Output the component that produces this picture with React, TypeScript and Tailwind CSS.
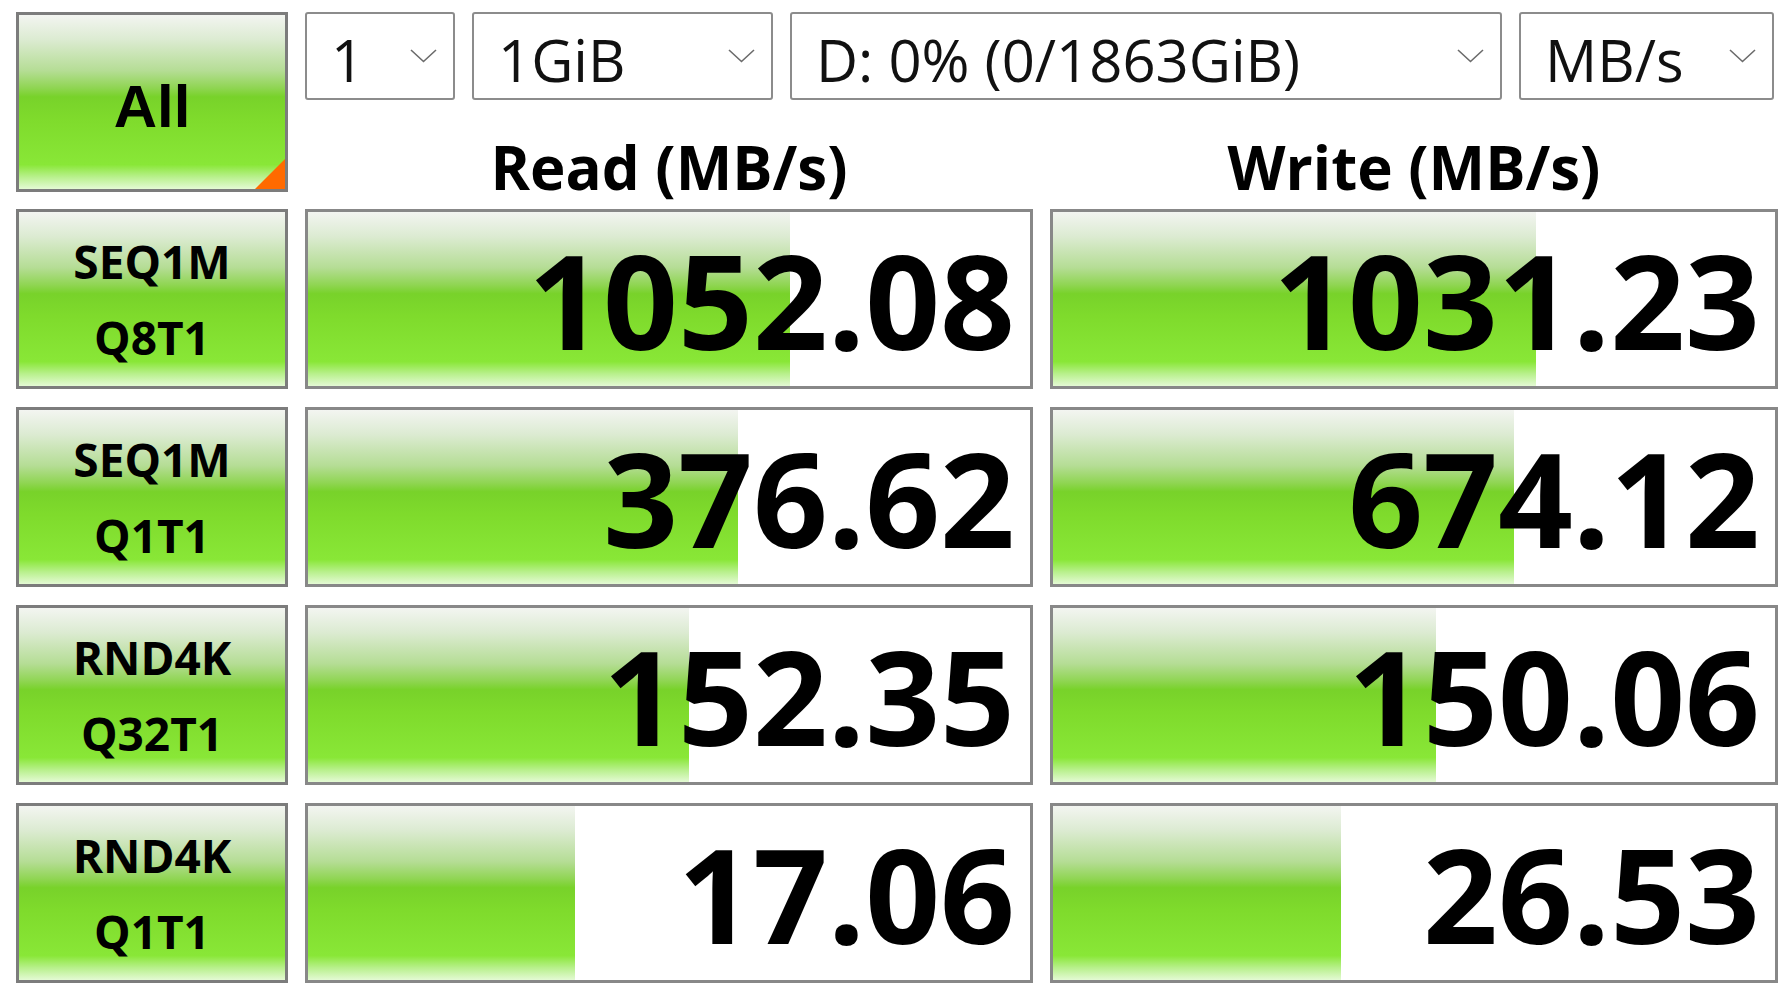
import React from 'react'

type Row = {
  label: [string, string]
  read: string
  write: string
  readFill: number
  writeFill: number
}

const ROWS: Row[] = [
  { label: ['SEQ1M', 'Q8T1'], read: '1052.08', write: '1031.23', readFill: 0.668, writeFill: 0.669 },
  { label: ['SEQ1M', 'Q1T1'], read: '376.62', write: '674.12', readFill: 0.596, writeFill: 0.639 },
  { label: ['RND4K', 'Q32T1'], read: '152.35', write: '150.06', readFill: 0.528, writeFill: 0.53 },
  { label: ['RND4K', 'Q1T1'], read: '17.06', write: '26.53', readFill: 0.37, writeFill: 0.399 },
]

const SELECTS: Array<{ value: string; width: string }> = [
  { value: '1', width: 'w-[150px]' },
  { value: '1GiB', width: 'w-[301px]' },
  { value: 'D: 0% (0/1863GiB)', width: 'w-[712px]' },
  { value: 'MB/s', width: 'w-[255px]' },
]

const GREEN =
  'bg-[linear-gradient(to_bottom,#f3f5f1_0%,#dcebd2_14%,#b5dd95_32%,#8fd552_42%,#78d22a_47%,#7fdb2c_60%,#89e737_86%,#b8f08c_93%,#e4fad4_100%)]'

function Chevron() {
  return (
    <svg width="27" height="14" viewBox="0 0 27 14" fill="none">
      <polyline points="1,1 13.5,12.5 26,1" stroke="#6b6b6b" strokeWidth="1.6" />
    </svg>
  )
}

function Select({ value, width }: { value: string; width: string }) {
  return (
    <div
      className={`${width} flex h-full items-center justify-between rounded-[3px] border-2 border-[#8c8c8c] bg-white pl-[24px] pr-[16px]`}
    >
      <span className="pt-[8px] text-[58px] leading-none text-[#111]">{value}</span>
      <Chevron />
    </div>
  )
}

function Meter({ value, fill }: { value: string; fill: number }) {
  return (
    <div className="relative flex h-full items-center justify-end overflow-hidden border-[3px] border-[#888] bg-white pr-[15px]">
      <div className={`absolute inset-y-0 left-0 ${GREEN}`} style={{ width: `${fill * 100}%` }} />
      <span className="relative text-[131px] font-bold leading-none text-black">{value}</span>
    </div>
  )
}

export default function App() {
  return (
    <div
      className="h-[1006px] w-[1787px] overflow-hidden bg-white pl-[16px] pt-[12px]"
      style={{ fontFamily: '"Open Sans", "Noto Sans", sans-serif' }}
    >
      <div className="flex gap-[17px]">
        <button
          className={`relative flex h-[180px] w-[272px] items-center justify-center border-[3px] border-[#7c7c7c] pt-[9px] ${GREEN}`}
        >
          <span
            className="text-[60px] font-bold leading-none text-black"
            style={{ fontFamily: '"Liberation Sans", Arial, sans-serif' }}
          >
            All
          </span>
          <span className="absolute bottom-0 right-0 h-0 w-0 border-b-[30px] border-l-[30px] border-b-[#ff6a00] border-l-transparent" />
        </button>

        <div className="flex w-[1473px] flex-col">
          <div className="flex h-[88px] gap-[17px]">
            {SELECTS.map((s) => (
              <Select key={s.value} value={s.value} width={s.width} />
            ))}
          </div>
          <div className="grid h-[92px] grid-cols-[728px_728px] gap-x-[17px]">
            <div className="pt-[37px] text-center text-[60px] font-bold leading-none text-black">Read (MB/s)</div>
            <div className="pt-[37px] text-center text-[60px] font-bold leading-none text-black">Write (MB/s)</div>
          </div>
        </div>
      </div>

      <div className="mt-[17px] flex flex-col gap-[18px]">
        {ROWS.map((row) => (
          <div key={row.label.join('')} className="grid h-[180px] grid-cols-[272px_728px_728px] gap-x-[17px]">
            <div
              className={`flex flex-col items-center justify-center border-[3px] border-[#7c7c7c] ${GREEN} text-[46px] font-bold leading-[76px] text-black`}
            >
              <span>{row.label[0]}</span>
              <span>{row.label[1]}</span>
            </div>
            <Meter value={row.read} fill={row.readFill} />
            <Meter value={row.write} fill={row.writeFill} />
          </div>
        ))}
      </div>
    </div>
  )
}
